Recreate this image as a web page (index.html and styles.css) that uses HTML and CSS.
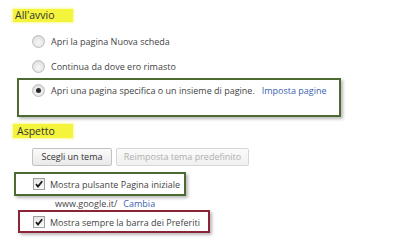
FILE: index.html
```html
<!DOCTYPE html>
<html>
<head>
<meta charset="utf-8">
<link rel="stylesheet" href="styles.css">
</head>
<body>
<div class="page">
  <h2 class="hl hl-first">All'avvio</h2>
  <div class="row r1"><span class="radio"></span><span>Apri la pagina Nuova scheda</span></div>
  <div class="row r2"><span class="radio"></span><span>Continua da dove ero rimasto</span></div>
  <div class="box box-green box-start">
    <div class="row"><span class="radio on"></span><span>Apri una pagina specifica o un insieme di pagine.</span><a class="link">Imposta pagine</a></div>
  </div>
  <h2 class="hl hl-second">Aspetto</h2>
  <div class="buttons">
    <button class="btn btn-theme">Scegli un tema</button>
    <button class="btn btn-disabled">Reimposta tema predefinito</button>
  </div>
  <div class="box box-green box-home">
    <div class="row"><span class="check"><svg width="10" height="10" viewBox="0 0 10 10"><path d="M2 5.2 L4 7.6 L8.2 2.2" fill="none" stroke="#1a1a1a" stroke-width="1.8"/></svg></span><span>Mostra pulsante Pagina iniziale</span></div>
  </div>
  <div class="home-url"><span>www.google.it/</span><a class="link">Cambia</a></div>
  <div class="box box-red">
    <div class="row"><span class="check"><svg width="10" height="10" viewBox="0 0 10 10"><path d="M2 5.2 L4 7.6 L8.2 2.2" fill="none" stroke="#1a1a1a" stroke-width="1.8"/></svg></span><span>Mostra sempre la barra dei Preferiti</span></div>
  </div>
</div>
</body>
</html>
```

FILE: styles.css
```css
html, body {
  margin: 0;
  padding: 0;
  background: #ffffff;
}
body {
  font-family: "Open Sans", "Noto Sans", sans-serif;
  font-size: 9px;
  color: #444444;
}
.page {
  width: 408px;
  height: 242px;
  overflow: hidden;
}
.hl {
  display: table;
  margin: 0 0 0 13px;
  padding: 0 18px 0 2px;
  height: 13px;
  line-height: 13px;
  font-size: 10.5px;
  font-weight: normal;
  color: #333333;
  background: #f4f43c;
  box-shadow: 0 0 2px 1px rgba(244, 244, 60, 0.5);
}
.hl-first { margin-top: 9px; }
.hl-second {
  margin-top: 7px;
  height: 14px;
  line-height: 14px;
  padding-left: 4px;
}
.row {
  display: flex;
  align-items: center;
  height: 16px;
  white-space: nowrap;
}
.r1 { margin: 11px 0 0 32px; }
.r2 { margin: 9px 0 0 32px; }
.radio {
  width: 11px;
  height: 11px;
  border-radius: 50%;
  border: 1px solid #bcbcbc;
  background: radial-gradient(circle at 50% 60%, #f8f8f8 0, #e6e6e6 55%, #d2d2d2 100%);
  margin-right: 6px;
  flex: none;
  display: flex;
  align-items: center;
  justify-content: center;
}
.radio.on::after {
  content: "";
  width: 5px;
  height: 5px;
  border-radius: 50%;
  background: #2a2a2a;
}
.check {
  width: 10px;
  height: 10px;
  border: 1px solid #a0a0a0;
  background: linear-gradient(#e6e6e6, #fbfbfb);
  margin-right: 5px;
  flex: none;
  display: flex;
}
.link {
  color: #3a5fb0;
  margin-left: 7px;
}
.box {
  border: 2px solid #4e6a33;
  box-shadow: 2px 2px 3px rgba(0, 0, 0, 0.28);
}
.box-start {
  width: 307px;
  margin: 4px 0 0 17px;
  padding: 2px 0 17px 13px;
}
.buttons {
  display: flex;
  gap: 4px;
  margin: 10px 0 0 32px;
}
.btn {
  box-sizing: border-box;
  height: 18px;
  padding: 0;
  font-family: inherit;
  font-size: 9px;
  color: #333333;
  border: 1px solid #c2c2c2;
  border-radius: 2px;
  background: linear-gradient(#fbfbfb, #e9e9e9);
  line-height: 16px;
  text-align: center;
}
.btn-theme { width: 80px; }
.btn-disabled {
  width: 133px;
  color: #b0b0b0;
  border-color: #d6d6d6;
  background: linear-gradient(#fbfbfb, #f0f0f0);
}
.box-home {
  width: 151px;
  margin: 6px 0 0 14px;
  padding: 2px 0 2px 17px;
}
.home-url {
  height: 12px;
  line-height: 12px;
  margin: 2px 0 0 55px;
  white-space: nowrap;
}
.home-url .link { margin-left: 6px; }
.box-red {
  border-color: #8a2535;
  width: 175px;
  margin: 0 0 0 18px;
  padding: 2px 0 1px 13px;
}
```
